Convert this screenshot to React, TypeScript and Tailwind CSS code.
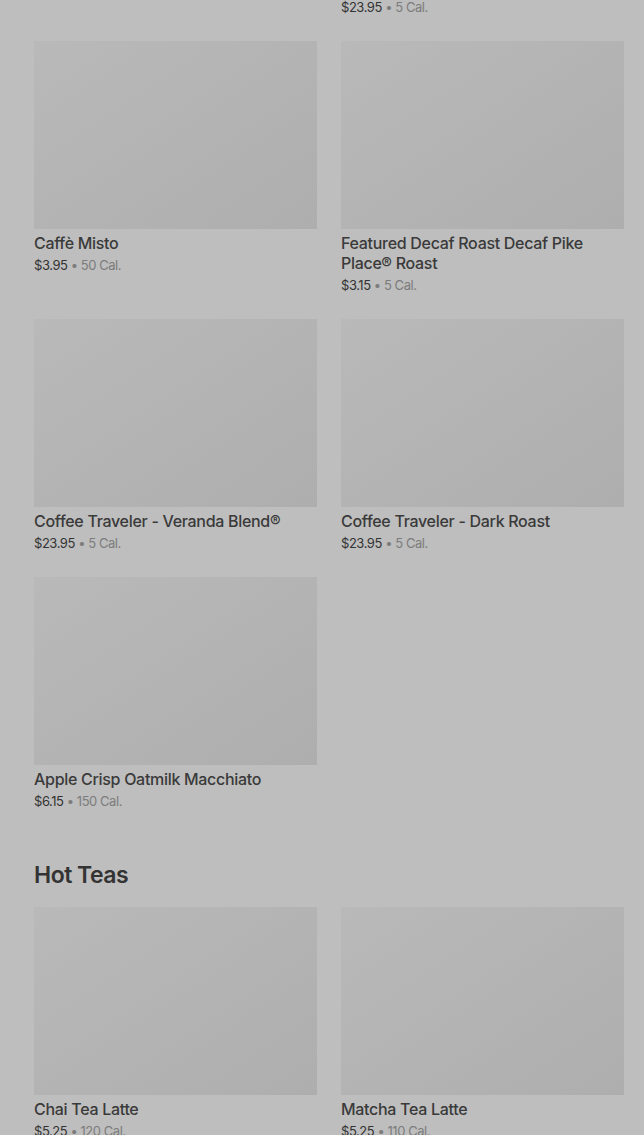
const font = { fontFamily: "Inter, 'Noto Sans', sans-serif" };

type Item = { name: string; price: string; cal: string };

const coffees: Item[] = [
  { name: "Caffè Misto", price: "$3.95", cal: "50 Cal." },
  { name: "Featured Decaf Roast Decaf Pike Place® Roast", price: "$3.15", cal: "5 Cal." },
  { name: "Coffee Traveler - Veranda Blend®", price: "$23.95", cal: "5 Cal." },
  { name: "Coffee Traveler - Dark Roast", price: "$23.95", cal: "5 Cal." },
  { name: "Apple Crisp Oatmilk Macchiato", price: "$6.15", cal: "150 Cal." },
];

const teas: Item[] = [
  { name: "Chai Tea Latte", price: "$5.25", cal: "120 Cal." },
  { name: "Matcha Tea Latte", price: "$5.25", cal: "110 Cal." },
];

function Price({ price, cal }: { price: string; cal: string }) {
  return (
    <div className="text-[13px] leading-[20px] tracking-[-0.45px]">
      <span className="text-[#333333]">{price}</span>
      <span className="text-[#7c7c7c]"> • {cal}</span>
    </div>
  );
}

function Card({ item }: { item: Item }) {
  return (
    <div className="flex flex-col">
      <div className="h-[188px] w-full bg-gradient-to-br from-[#b9b9b9] to-[#aeaeae]" />
      <div className="mt-[4px] text-[16px] font-medium leading-[20px] tracking-[-0.3px] text-[#3a3a3a] pr-4">{item.name}</div>
      <div className="mt-[2px]">
        <Price price={item.price} cal={item.cal} />
      </div>
    </div>
  );
}

export default function App() {
  return (
    <div className="min-h-[1135px] w-[644px] overflow-hidden bg-[#bebebe] pl-[34px] pr-[20px]" style={font}>
      <div className="grid grid-cols-2 gap-x-[24px] -mt-[3px]">
        <div />
        <Price price="$23.95" cal="5 Cal." />
      </div>
      <div className="mt-[24px] grid grid-cols-2 gap-x-[24px] gap-y-[24px]">
        {coffees.map((c) => (
          <Card key={c.name} item={c} />
        ))}
      </div>
      <h2 className="mt-[48px] text-[23px] font-semibold leading-[32px] tracking-[-0.5px] text-[#333333]">Hot Teas</h2>
      <div className="mt-[16px] grid grid-cols-2 gap-x-[24px] gap-y-[24px]">
        {teas.map((c) => (
          <Card key={c.name} item={c} />
        ))}
      </div>
    </div>
  );
}
